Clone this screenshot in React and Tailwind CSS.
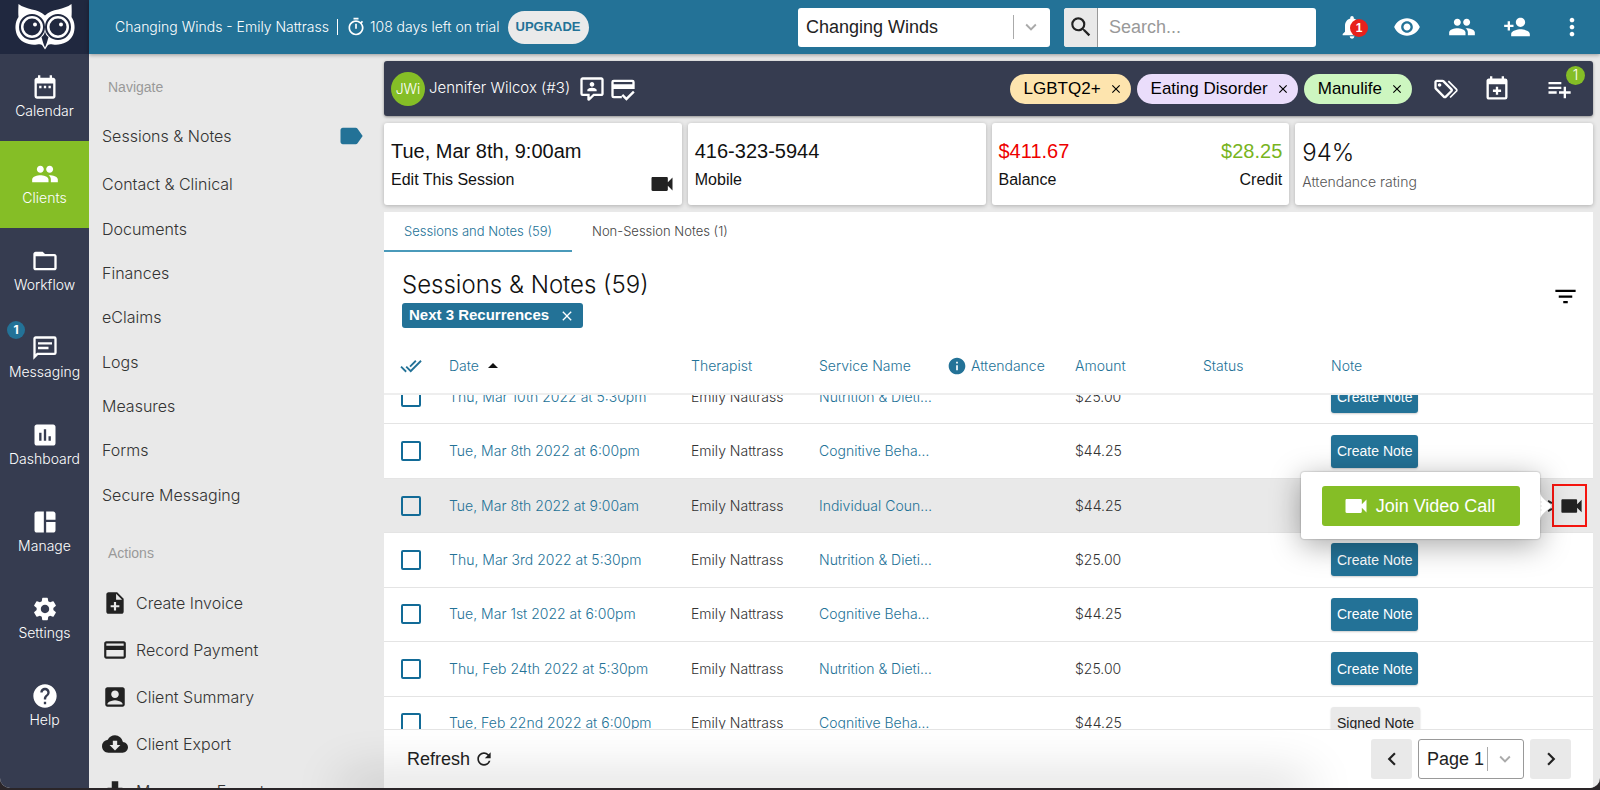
import { useLayoutEffect, useRef } from 'react';
import {
  MdDateRange, MdPeople, MdFolderOpen, MdAssessment, MdSpaceDashboard, MdSettings, MdHelp,
  MdLabel, MdNoteAdd, MdCreditCard, MdAccountBox, MdCloudDownload, MdDownload, MdOutlineTimer,
  MdSearch, MdNotifications, MdVisibility, MdPersonAdd, MdMoreVert, MdPlaylistAdd, MdVideocam,
  MdClose, MdFilterList, MdDoneAll, MdArrowDropUp, MdInfo, MdRefresh, MdChevronLeft,
  MdChevronRight, MdKeyboardArrowDown,
} from 'react-icons/md';

const PATHS = {
  message: 'M20 2A2 2 0 0 1 22 4V16A2 2 0 0 1 20 18H6L2 22V4C2 2.89 2.9 2 4 2H20M4 4V17.17L5.17 16H20V4H4M6 7H18V9H6V7M6 11H15V13H6V11Z',
  contact: 'M20 2H4C2.9 2 2 2.9 2 4V16A2 2 0 0 0 4 18H8V21C8 21.6 8.4 22 9 22H9.5C9.7 22 10 21.9 10.2 21.7L13.9 18H20C21.1 18 22 17.1 22 16V4C22 2.9 21.1 2 20 2M20 16H13.1L10 19.1V16H4V4H20V16M16 14H8V13C8 11.7 10.7 11 12 11S16 11.7 16 13V14M12 6C13.1 6 14 6.9 14 8S13.1 10 12 10 10 9.1 10 8 10.9 6 12 6Z',
  cardCheck: 'M20 4H4A2 2 0 0 0 2 6V18A2 2 0 0 0 4 20H11V18H4V12H22V6A2 2 0 0 0 20 4M20 8H4V6H20M14.93 19.17L12.1 16.34L10.69 17.75L14.93 22L22 14.93L20.59 13.5',
  tags: 'M6.5 10C7.3 10 8 9.3 8 8.5S7.3 7 6.5 7 5 7.7 5 8.5 5.7 10 6.5 10M9 6L16 13L11 18L4 11V6H9M9 4H4C2.9 4 2 4.9 2 6V11C2 11.6 2.2 12.1 2.6 12.4L9.6 19.4C9.9 19.8 10.4 20 11 20S12.1 19.8 12.4 19.4L17.4 14.4C17.8 14 18 13.5 18 13C18 12.4 17.8 11.9 17.4 11.6L10.4 4.6C10.1 4.2 9.6 4 9 4M13.5 5.7L14.5 4.7L21.4 11.6C21.8 12 22 12.5 22 13S21.8 14.1 21.4 14.4L16 19.8L15 18.8L20.7 13L13.5 5.7Z',
  calendarPlus: 'M19 19V8H5V19H19M16 1H18V3H19A2 2 0 0 1 21 5V19A2 2 0 0 1 19 21H5C3.89 21 3 20.1 3 19V5C3 3.89 3.89 3 5 3H6V1H8V3H16V1M11 10H13V12.5H15.5V14.5H13V17H11V14.5H8.5V12.5H11V10Z',
};

const makeIcon = (d) => ({ size = 24, className = '' }) => (
  <svg width={size} height={size} viewBox="0 0 24 24" fill="currentColor" className={className} aria-hidden="true">
    <path d={d} />
  </svg>
);
const MessageIcon = makeIcon(PATHS.message);
const ContactIcon = makeIcon(PATHS.contact);
const CardCheckIcon = makeIcon(PATHS.cardCheck);
const TagsIcon = makeIcon(PATHS.tags);
const CalendarPlusIcon = makeIcon(PATHS.calendarPlus);

function OwlLogo() {
  return (
    <svg width="62" height="46" viewBox="0 0 62 46" role="img" aria-label="Owl Practice">
      <path
        fill="#fff"
        d="M4.500 0C12 6 24 4.500 31 11.500C38 4.500 50 6 57.500 0C57.800 6 57.800 10 57.500 13C61 18 61.500 25 59 31C55.500 38.500 47 41.500 39 40.500C36.500 40 35 40 34 41L31 45.500L28 41C27 40 25.500 40 23 40.500C15 41.500 6.500 38.500 3 31C0.500 25 1 18 4.500 13C4.200 10 4.200 6 4.500 0Z"
      />
      {[18, 44].map((cx) => (
        <g key={cx}>
          <circle cx={cx} cy="23" r="12" fill="#fff" stroke="#20283f" strokeWidth="2" />
          <circle cx={cx} cy="23" r="8.500" fill="#20283f" />
          <circle cx={cx === 18 ? 21 : 47} cy="20.500" r="2" fill="#fff" />
        </g>
      ))}
      <path fill="#20283f" d="M27.500 33C29.500 32 30.500 30 31 27C31.500 30 32.500 32 34.500 33C33.500 37 32.500 40 31 43.500C29.500 40 28.500 37 27.500 33Z" />
    </svg>
  );
}

const railItems = [
  { label: 'Calendar', Icon: MdDateRange },
  { label: 'Clients', Icon: MdPeople, active: true },
  { label: 'Workflow', Icon: MdFolderOpen },
  { label: 'Messaging', Icon: MessageIcon, badge: 1 },
  { label: 'Dashboard', Icon: MdAssessment },
  { label: 'Manage', Icon: MdSpaceDashboard },
  { label: 'Settings', Icon: MdSettings },
  { label: 'Help', Icon: MdHelp },
];

function Rail() {
  return (
    <nav aria-label="Main" className="flex w-[89px] shrink-0 flex-col bg-[#363c50]">
      <a href="#home" className="flex h-[54px] shrink-0 items-center justify-center bg-[#20283f]">
        <OwlLogo />
      </a>
      {railItems.map(({ label, Icon, active, badge }) => (
        <a
          key={label}
          href={`#${label.toLowerCase()}`}
          className={`relative flex h-[87px] shrink-0 flex-col items-center justify-center pb-[2px] text-sm font-light text-white ${active ? 'bg-[#85be26]' : ''}`}
        >
          <Icon size={28} />
          {label}
          {badge && (
            <span className="absolute top-[6px] left-[7px] flex size-[18px] items-center justify-center rounded-full bg-[#237297] text-xs font-bold">
              {badge}
            </span>
          )}
        </a>
      ))}
    </nav>
  );
}

const divider = 'h-6 w-px bg-[#aaaaaa]';

function TopBar() {
  return (
    <header className="relative z-20 flex h-[54px] shrink-0 items-center bg-[#237297] pr-[14px] pl-[26px] text-white shadow-[0_1px_4px_rgba(0,0,0,0.35)]">
      <div className="flex items-center text-sm font-light whitespace-nowrap">
        <span>Changing Winds - Emily Nattrass</span>
        <span className="mx-2 h-4 w-px bg-white" />
        <MdOutlineTimer size={20} className="mr-1" />
        <span>108 days left on trial</span>
        <button className="ml-2 h-[33px] rounded-full bg-[#eaeaea] px-2 font-['Liberation_Sans',sans-serif] text-[13px] font-bold text-[#237297]">
          UPGRADE
        </button>
      </div>

      <div className="ml-auto flex items-center font-['Liberation_Sans',sans-serif] text-lg text-[#222222]">
        <div className="relative flex h-[39px] w-[252px] items-center rounded-[3px] bg-white">
          <select aria-label="Practice" className="h-full w-full appearance-none bg-transparent pl-2">
            <option>Changing Winds</option>
          </select>
          <span className="pointer-events-none absolute right-2 flex items-center gap-[6px] text-[#aaaaaa]">
            <span className={divider} />
            <MdKeyboardArrowDown size={22} />
          </span>
        </div>
        <div className="ml-[14px] flex h-[39px] w-[252px] overflow-hidden rounded-[3px] bg-white">
          <button aria-label="Search" className="flex w-[34px] shrink-0 items-center justify-center border-r border-[#999999] bg-[#e9e9e9]">
            <MdSearch size={26} />
          </button>
          <input aria-label="Search clients" placeholder="Search..." className="w-full min-w-0 px-[11px] placeholder:text-[#999999]" />
        </div>
      </div>

      <div className="ml-[22px] flex items-center gap-[27px]">
        <button aria-label="Notifications" className="relative flex">
          <MdNotifications size={28} />
          <span className="absolute top-[6px] right-0 -mr-[2px] flex size-[18px] items-center justify-center rounded-full bg-[#e8201c] font-['Liberation_Sans',sans-serif] text-xs font-bold">1</span>
        </button>
        <button aria-label="Watch"><MdVisibility size={28} /></button>
        <button aria-label="Clients"><MdPeople size={28} /></button>
        <button aria-label="Add client"><MdPersonAdd size={28} /></button>
        <button aria-label="More"><MdMoreVert size={28} /></button>
      </div>
    </header>
  );
}

const navItems = ['Contact & Clinical', 'Documents', 'Finances', 'eClaims', 'Logs', 'Measures', 'Forms', 'Secure Messaging'];
const actions = [
  { label: 'Create Invoice', Icon: MdNoteAdd },
  { label: 'Record Payment', Icon: MdCreditCard },
  { label: 'Client Summary', Icon: MdAccountBox },
  { label: 'Client Export', Icon: MdCloudDownload },
  { label: 'Messages Export', Icon: MdDownload },
];

function Sidebar() {
  return (
    <aside className="w-[295px] shrink-0 overflow-hidden text-base font-light text-[#333333]">
      <h2 className="flex h-[66px] items-center pl-[19px] font-['Liberation_Sans',sans-serif] text-sm font-normal text-[#999999]">Navigate</h2>
      <a href="#sessions" className="flex h-8 items-center justify-between pr-[19px] pl-[13px]">
        Sessions &amp; Notes
        <MdLabel size={28} className="text-[#237297]" />
      </a>
      <div className="mt-[10px] grid h-[355px] auto-rows-fr">
        {navItems.map((label) => (
          <a key={label} href="#section" className="flex items-center pl-[13px]">{label}</a>
        ))}
      </div>
      <h2 className="mt-5 flex h-8 items-center pl-[19px] font-['Liberation_Sans',sans-serif] text-sm font-normal text-[#999999]">Actions</h2>
      <div className="mt-[10px]">
        {actions.map(({ label, Icon }) => (
          <button key={label} className="flex h-[47px] w-full items-center gap-2 pl-[13px]">
            <Icon size={26} className="text-[#222222]" />
            {label}
          </button>
        ))}
      </div>
    </aside>
  );
}

const tags = [
  { label: 'LGBTQ2+', tone: 'bg-[#fde4ae]' },
  { label: 'Eating Disorder', tone: 'bg-[#eaddfb]' },
  { label: 'Manulife', tone: 'bg-[#cdf6c0]' },
];

function ClientBar() {
  return (
    <div className="flex h-[55px] shrink-0 items-center rounded-[3px] bg-[#363c50] pr-5 pl-[7px] text-white shadow-[0_1px_3px_rgba(0,0,0,0.4)]">
      <span className="flex size-[34px] items-center justify-center rounded-full bg-[#85be26] text-sm font-light">JWi</span>
      <h1 className="mx-1 mr-2 text-[15px] font-light">Jennifer Wilcox (#3)</h1>
      <button aria-label="Contact" className="mr-[3px]"><ContactIcon size={28} /></button>
      <button aria-label="Payment method"><CardCheckIcon size={28} /></button>
      <ul className="ml-auto flex gap-[6px] font-['Liberation_Sans',sans-serif] text-[17px] text-black">
        {tags.map(({ label, tone }) => (
          <li key={label} className={`flex h-[30px] items-center gap-2 rounded-full pr-2 pl-[14px] ${tone}`}>
            {label}
            <button aria-label={`Remove ${label}`}><MdClose size={14} /></button>
          </li>
        ))}
      </ul>
      <button aria-label="Tags" className="ml-5"><TagsIcon size={28} /></button>
      <button aria-label="Add session" className="ml-[23px]"><CalendarPlusIcon size={28} /></button>
      <button aria-label="Add to list" className="relative ml-[34px]">
        <MdPlaylistAdd size={28} />
        <span className="absolute -top-[9px] -right-[12px] flex size-[19px] items-center justify-center rounded-full bg-[#85be26] text-sm font-light">1</span>
      </button>
    </div>
  );
}

const card = 'relative flex h-[82px] flex-col justify-center gap-[3px] rounded-[3px] bg-white px-[7px] shadow-[0_1px_4px_rgba(0,0,0,0.25)]';

function SummaryCards() {
  return (
    <div className="grid shrink-0 grid-cols-4 gap-[6px] font-['Liberation_Sans',sans-serif] text-base text-[#111111]">
      <a href="#session" className={card}>
        <strong className="text-xl font-normal">Tue, Mar 8th, 9:00am</strong>
        <span>Edit This Session</span>
        <MdVideocam size={28} className="absolute right-[6px] bottom-[7px] text-[#222222]" />
      </a>
      <div className={card}>
        <strong className="text-xl font-normal">416-323-5944</strong>
        <span>Mobile</span>
      </div>
      <div className={card}>
        <div className="flex justify-between text-xl">
          <span className="text-[#ee0000]">$411.67</span>
          <span className="text-[#78b41e]">$28.25</span>
        </div>
        <div className="flex justify-between">
          <span>Balance</span>
          <span>Credit</span>
        </div>
      </div>
      <div className={`${card} font-['Inter',sans-serif] font-light`}>
        <strong className="text-2xl font-light">94%</strong>
        <span className="text-sm text-[#555555]">Attendance rating</span>
      </div>
    </div>
  );
}

const sessions = [
  { date: 'Thu, Mar 10th 2022 at 5:30pm', service: 'Nutrition & Dieti…', amount: '$25.00' },
  { date: 'Tue, Mar 8th 2022 at 6:00pm', service: 'Cognitive Beha…', amount: '$44.25' },
  { date: 'Tue, Mar 8th 2022 at 9:00am', service: 'Individual Coun…', amount: '$44.25', video: true },
  { date: 'Thu, Mar 3rd 2022 at 5:30pm', service: 'Nutrition & Dieti…', amount: '$25.00' },
  { date: 'Tue, Mar 1st 2022 at 6:00pm', service: 'Cognitive Beha…', amount: '$44.25' },
  { date: 'Thu, Feb 24th 2022 at 5:30pm', service: 'Nutrition & Dieti…', amount: '$25.00' },
  { date: 'Tue, Feb 22nd 2022 at 6:00pm', service: 'Cognitive Beha…', amount: '$44.25', signed: true },
];

function VideoActions() {
  return (
    <div className="absolute top-0 right-[6px] z-10 flex h-full items-center">
      <div className="relative flex h-[67px] w-[239px] items-center justify-center rounded-[3px] bg-white shadow-[0_6px_30px_rgba(0,0,0,0.35),0_0_2px_rgba(0,0,0,0.4)]">
        <button className="flex h-10 w-[198px] items-center justify-center gap-[6px] rounded-[3px] bg-[#85be26] pr-1 font-['Liberation_Sans',sans-serif] text-lg text-white">
          <MdVideocam size={28} />
          Join Video Call
        </button>
      </div>
      <svg width="12" height="28" viewBox="0 0 12 28" aria-hidden="true" className="relative">
        <path d="M8 9L12 11M8 19L12 17" stroke="#222222" strokeWidth="2" />
        <path d="M0 0C1 7 11 11 11.500 14C11 17 1 21 0 28Z" fill="#fff" stroke="#bbbbbb" strokeWidth="0.500" />
        <path d="M0 10H2M0 14H2M0 18H2" stroke="#dddddd" strokeWidth="1" />
      </svg>
      <button aria-label="Video call" className="flex h-[43px] w-[35px] items-center justify-center border-2 border-[#f5150f] pl-1 text-[#222222]">
        <MdVideocam size={28} />
      </button>
    </div>
  );
}

const th = 'sticky top-0 z-[5] h-[56px] border-b-2 border-[#eeeeee] bg-white px-2 text-left font-light text-[#237297]';
const td = 'h-[54px] border-b border-[#e4e4e4] px-2';

function SessionsTable() {
  const scroller = useRef(null);
  useLayoutEffect(() => {
    scroller.current.scrollTop = 25;
  }, []);
  return (
    <div ref={scroller} className="min-h-0 flex-1 overflow-x-hidden overflow-y-auto [scrollbar-width:none]">
      <table className="h-[437px] w-full table-fixed border-separate border-spacing-0 text-sm font-light whitespace-nowrap text-[#333333]">
        <colgroup>
          <col className="w-[57px]" />
          <col className="w-[242px]" />
          <col className="w-[128px]" />
          <col className="w-[128px]" />
          <col className="w-[128px]" />
          <col className="w-[128px]" />
          <col className="w-[128px]" />
          <col />
        </colgroup>
        <thead>
          <tr>
            <th className={`${th} pl-4`}><MdDoneAll size={22} aria-label="Select all" /></th>
            <th className={th}><span className="flex items-center gap-[2px]">Date <MdArrowDropUp size={24} className="text-[#111111]" /></span></th>
            <th className={th}>Therapist</th>
            <th className={th}>Service Name</th>
            <th className={th}><span className="flex items-center gap-1"><MdInfo size={20} />Attendance</span></th>
            <th className={th}>Amount</th>
            <th className={th}>Status</th>
            <th className={th}>Note</th>
          </tr>
        </thead>
        <tbody>
          {sessions.map((s) => (
            <tr key={s.date} className={s.video ? 'bg-[#e9e9e9]' : ''}>
              <td className={`${td} pl-[17px]`}>
                <input type="checkbox" aria-label={`Select ${s.date}`} className="block size-5 appearance-none rounded-[2px] border-2 border-[#126b97]" />
              </td>
              <td className={td}><a href="#session" className="text-[#237297]">{s.date}</a></td>
              <td className={td}>Emily Nattrass</td>
              <td className={td}><a href="#service" className="text-[#237297]">{s.service}</a></td>
              <td className={td} />
              <td className={td}>{s.amount}</td>
              <td className={td} />
              <td className={`${td} relative`}>
                {s.video ? (
                  <VideoActions />
                ) : (
                  <button className={`h-[33px] rounded-[3px] px-[6px] font-['Liberation_Sans',sans-serif] text-sm shadow-[0_1px_2px_rgba(0,0,0,0.2)] ${s.signed ? 'bg-[#e9e9e9] text-[#222222]' : 'bg-[#237297] text-white'}`}>
                    {s.signed ? 'Signed Note' : 'Create Note'}
                  </button>
                )}
              </td>
            </tr>
          ))}
        </tbody>
      </table>
    </div>
  );
}

function Footer() {
  const pageButton = 'flex h-10 w-[41px] items-center justify-center rounded-[3px] bg-[#e9e9e9]';
  return (
    <footer className="flex h-[59px] shrink-0 items-center border-t border-[#e4e4e4] pr-[22px] pl-[23px] font-['Liberation_Sans',sans-serif] text-lg text-[#222222]">
      <button className="flex items-center gap-1">
        Refresh <MdRefresh size={20} />
      </button>
      <div className="ml-auto flex items-center gap-[6px]">
        <button aria-label="Previous page" className={pageButton}><MdChevronLeft size={26} /></button>
        <div className="relative flex h-10 w-[106px] items-center rounded-[3px] border border-[#999999] bg-white">
          <select aria-label="Page" className="h-full w-full appearance-none bg-transparent pl-2">
            <option>Page 1</option>
          </select>
          <span className="pointer-events-none absolute right-[7px] flex items-center gap-[6px] text-[#aaaaaa]">
            <span className={divider} />
            <MdKeyboardArrowDown size={22} />
          </span>
        </div>
        <button aria-label="Next page" className={pageButton}><MdChevronRight size={26} /></button>
      </div>
    </footer>
  );
}

function SessionsPanel() {
  return (
    <section className="flex min-h-0 flex-1 flex-col bg-white">
      <div role="tablist" className="flex h-10 shrink-0 text-[13px] font-light">
        <button role="tab" aria-selected="true" className="border-b-2 border-[#4a9aba] px-5 pt-[2px] text-[#237297]">Sessions and Notes (59)</button>
        <button role="tab" aria-selected="false" className="border-b-2 border-transparent px-5 pt-[2px] text-[#444444]">Non-Session Notes (1)</button>
      </div>
      <div className="flex h-[87px] shrink-0 items-start justify-between pt-[17px] pr-[14px] pl-[18px]">
        <div>
          <h2 className="text-2xl font-light text-[#111111]">Sessions &amp; Notes (59)</h2>
          <span className="mt-[2px] flex h-[25px] w-fit items-center gap-[10px] rounded-[3px] bg-[#237297] pr-2 pl-[7px] font-['Liberation_Sans',sans-serif] text-[15px] font-bold text-white">
            Next 3 Recurrences
            <button aria-label="Remove filter"><MdClose size={16} className="block" /></button>
          </span>
        </div>
        <button aria-label="Filter" className="mt-[14px]"><MdFilterList size={27} className="text-black" /></button>
      </div>
      <SessionsTable />
      <Footer />
    </section>
  );
}

export default function App() {
  return (
    <div className="h-screen bg-[#2a2528] pb-[2px] font-['Inter',sans-serif]">
      <div className="relative flex h-full overflow-hidden rounded-b-[10px] bg-[#e9e9e9]">
        <Rail />
        <div className="flex min-w-0 flex-1 flex-col">
          <TopBar />
          <div className="flex min-h-0 flex-1">
            <Sidebar />
            <main className="flex min-w-0 flex-1 flex-col gap-[7px] pt-[7px] pr-[7px]">
              <ClientBar />
              <SummaryCards />
              <SessionsPanel />
            </main>
          </div>
        </div>
        <div className="pointer-events-none absolute right-[300px] -bottom-1 left-[350px] z-30 h-1 shadow-[0_0_50px_8px_rgba(0,0,0,0.24)]" />
      </div>
    </div>
  );
}
